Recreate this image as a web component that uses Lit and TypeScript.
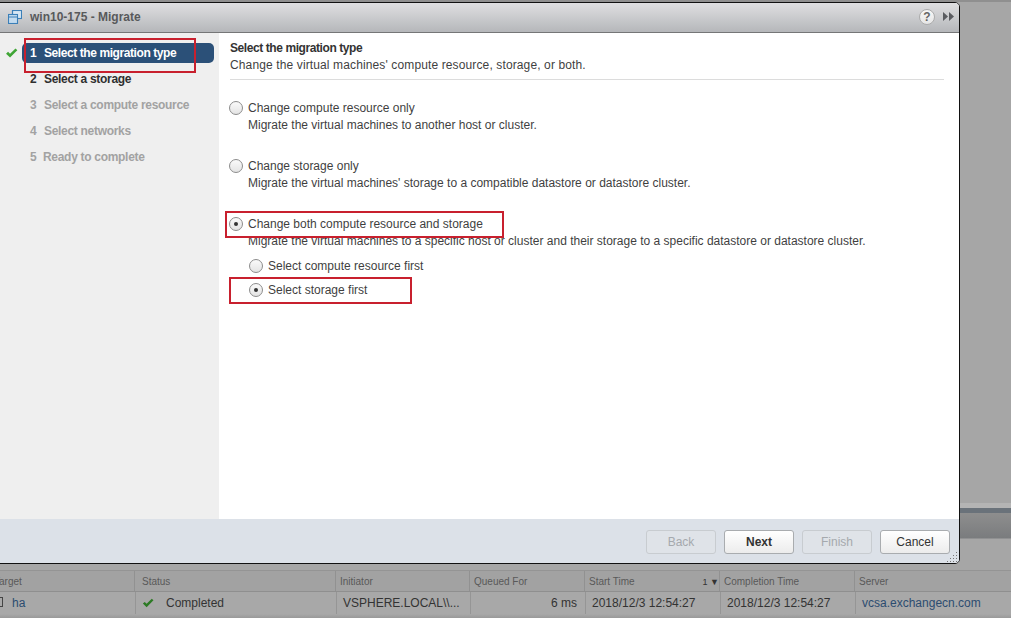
import { LitElement, html, css, svg } from "lit";
import { customElement } from "lit/decorators.js";

const check = (w: number, h: number, color: string) => html`<svg class="check" width=${w} height=${h} viewBox="0 0 14 11"><path d="M1 6.2 L3.2 4.2 L5.4 6.4 L11.4 0.6 L13.4 2.4 L5.4 10.4 Z" fill=${color}></path></svg>`;

@customElement("app-root")
export class AppRoot extends LitElement {
  static styles = css`
    :host {
      display: flex; flex-direction: column; position: relative;
      width: 1011px; height: 618px; overflow: hidden;
      font-family: "Liberation Sans", Arial, sans-serif; font-size: 12px; color: #3c3c3c;
      background: linear-gradient(180deg,
        #8f8f8f 0, #8f8f8f 2px, #a6a6a6 2px, #a6a6a6 503px, #b4b4b4 503px, #b4b4b4 508px,
        #6a727a 508px, #6a727a 513px, #8e8e8e 513px, #7a7c7e 538px, #a6a6a6 539px);
    }
    .dialog {
      box-sizing: border-box; width: 962px; height: 562px; margin: 2px 0 0 -2px; flex: none;
      display: flex; flex-direction: column; background: #fff;
      border: 1px solid #111; border-radius: 0 5px 5px 0;
    }
    .titlebar {
      box-sizing: border-box; height: 30px; flex: none; display: flex; align-items: center;
      padding: 0 5px 2px 9px; border-bottom: 1px solid #757677;
      background: linear-gradient(180deg, #dfdfe1, #b5b7ba); border-radius: 0 4px 0 0;
    }
    .title { margin-left: 8px; font-weight: bold; color: #58595b; flex: 1; }
    .help {
      box-sizing: border-box; width: 16px; height: 16px; border-radius: 50%; border: 1px solid #acacac;
      background: linear-gradient(180deg, #f7f7f7, #e6e6e6); color: #666; font-size: 12px; font-weight: bold; line-height: 14px; text-align: center;
      margin-right: 8px;
    }
    .main { flex: 1; display: flex; min-height: 0; }
    nav {
      box-sizing: border-box; width: 220px; flex: none; background: #efefef; padding: 10px 5px 0 23px;
      display: flex; flex-direction: column; gap: 6px;
    }
    .step { height: 20px; display: flex; align-items: center; color: #a2a2a2; font-weight: bold; letter-spacing: -0.3px; padding-left: 8px; }
    .step.prev { color: #2f2f2f; }
    .step.active { background: #2b5078; color: #fff; border-radius: 5px; position: relative; letter-spacing: -0.42px; }
    .step.active .check { position: absolute; left: -17px; top: 5px; }
    .num { width: 14px; flex: none; }
    .step.last .num { width: 13px; }
    .content { flex: 1; padding: 7px 15px 0 11px; min-width: 0; color: #3f3f3f; }
    .head { border-bottom: 1px solid #dcdcdc; height: 39px; line-height: 17px; margin-bottom: 19px; letter-spacing: 0.125px; }
    .head b { display: block; color: #333; letter-spacing: -0.42px; }
    .opt { height: 58px; }
    .opt.tight { height: auto; }
    .line { display: flex; align-items: center; height: 17px; }
    .radio {
      box-sizing: border-box; width: 14px; height: 14px; border-radius: 50%; border: 1px solid #8c8c8c; flex: none;
      background: linear-gradient(180deg, #fafafa, #e4e4e4); margin: 0 5px 0 -1px; position: relative;
    }
    .radio.on::after {
      content: ""; position: absolute; left: 4px; top: 4px; width: 4px; height: 4px; border-radius: 50%; background: #333;
    }
    .sub { padding-left: 18px; line-height: 17px; height: 17px; margin-top: 1px; }
    .nested { padding-left: 20px; margin-top: 7px; display: flex; flex-direction: column; gap: 7px; }
    footer {
      box-sizing: border-box; height: 44px; flex: none; background: #dce1e8; border-radius: 0 0 4px 0;
      display: flex; justify-content: flex-end; align-items: flex-start; gap: 8px; padding: 11px 9px 0 0; position: relative;
    }
    button {
      box-sizing: border-box; width: 70px; height: 24px; padding: 0 0 1px; border-radius: 3px; font: inherit;
      border: 1px solid #a9acaf; color: #333; background: linear-gradient(180deg, #fff, #ececec);
    }
    button.primary { font-weight: bold; }
    button[disabled] { border-color: #c8ccd0; color: #a5a9ad; background: #dfe3e8; }
    .grip { position: absolute; right: 1px; bottom: 1px; }
    .table { flex: none; margin: 6px 0 0 -10px; }
    .row { display: grid; }
    .row.hdr { grid-template-columns: 145px 201px 134px 115px 135px 135px 1fr; height: 22px; background: #a2a2a2; border-top: 1px solid #949494; border-bottom: 1px solid #8f8f8f; box-sizing: border-box; color: #595959; font-size: 10px; }
    .row.hdr > div { padding-left: 4px; line-height: 22px; height: 20px; border-right: 1px solid #919191; position: relative; }
    .row.hdr > .h-status { padding-left: 7px; }
    .row.body { grid-template-columns: 146px 201px 134px 115px 135px 135px 1fr; height: 26px; background: linear-gradient(180deg, #a8a8a8 0, #a8a8a8 22px, #999 26px); }
    .row.body > div { display: flex; align-items: center; height: 22px; padding-left: 6px; border-right: 1px solid #959595; color: #333; white-space: nowrap; }
    .row.body > div:last-child, .row.hdr > div:last-child { border-right: 0; }
    .link { color: #2c4c70; }
    .row.body > .c-target { padding-left: 22px; position: relative; }
    .srv { position: absolute; left: 8px; top: 5px; width: 5px; height: 10px; border: 1px solid #444; box-sizing: border-box; }
    .c-status .check { margin-right: 12px; }
    .row.body > .c-q { justify-content: flex-end; padding-right: 8px; }
    .sort { position: absolute; right: 0; top: 0; font-size: 9px; color: #333; }
    .mark { position: absolute; box-sizing: border-box; border: 2px solid #c8202e; pointer-events: none; }
    .m1 { left: 24px; top: 38px; width: 172px; height: 35px; }
    .m2 { left: 225px; top: 211px; width: 279px; height: 27px; }
    .m3 { left: 229px; top: 277px; width: 183px; height: 27px; }
  `;

  render() {
    const dots = [[9,1],[6,4],[9,4],[3,7],[6,7],[9,7],[0,10],[3,10],[6,10],[9,10]];
    return html`
      <div class="dialog">
        <div class="titlebar">
          <svg width="14" height="14" viewBox="0 0 14 14" fill="none" stroke="#3b7fb8" stroke-width="1.1">
            <rect x="4.5" y="0.5" width="9" height="8" fill="#d7e6f3"></rect>
            <rect x="0.5" y="4.5" width="9" height="9" fill="#c3dbef"></rect>
            <path d="M0.5 7h9M4.5 0.5v4"></path>
          </svg>
          <span class="title">win10-175 - Migrate</span>
          <div class="help">?</div>
          <svg width="11" height="9" viewBox="0 0 11 9"><path d="M0 0 L5 4.5 L0 9 Z M6 0 L11 4.5 L6 9 Z" fill="#5a5c60"></path></svg>
        </div>
        <div class="main">
          <nav>
            <div class="step active">${check(13, 10, "#3fa535")}<span class="num">1</span>Select the migration type</div>
            <div class="step prev"><span class="num">2</span>Select a storage</div>
            <div class="step"><span class="num">3</span>Select a compute resource</div>
            <div class="step"><span class="num">4</span>Select networks</div>
            <div class="step last"><span class="num">5</span>Ready to complete</div>
          </nav>
          <div class="content">
            <div class="head"><b>Select the migration type</b>Change the virtual machines' compute resource, storage, or both.</div>
            <div class="opt">
              <div class="line"><span class="radio"></span>Change compute resource only</div>
              <div class="sub">Migrate the virtual machines to another host or cluster.</div>
            </div>
            <div class="opt">
              <div class="line"><span class="radio"></span>Change storage only</div>
              <div class="sub">Migrate the virtual machines' storage to a compatible datastore or datastore cluster.</div>
            </div>
            <div class="opt tight">
              <div class="line"><span class="radio on"></span>Change both compute resource and storage</div>
              <div class="sub">Migrate the virtual machines to a specific host or cluster and their storage to a specific datastore or datastore cluster.</div>
              <div class="nested">
                <div class="line"><span class="radio"></span>Select compute resource first</div>
                <div class="line"><span class="radio on"></span>Select storage first</div>
              </div>
            </div>
          </div>
        </div>
        <footer>
          <button disabled>Back</button>
          <button class="primary">Next</button>
          <button disabled>Finish</button>
          <button>Cancel</button>
          <svg class="grip" width="11" height="11" viewBox="0 0 11 11">
            ${dots.map(([x, y]) => svg`<rect x=${x} y=${y} width="1" height="1" fill="#777"></rect>`)}
          </svg>
        </footer>
      </div>
      <div class="table">
        <div class="row hdr">
          <div>Target</div><div class="h-status">Status</div><div>Initiator</div><div>Queued For</div>
          <div>Start Time<span class="sort">1 ▼</span></div><div>Completion Time</div><div>Server</div>
        </div>
        <div class="row body">
          <div class="c-target"><span class="srv"></span><span class="link">ha</span></div>
          <div class="c-status">${check(12, 10, "#2c7a24")}Completed</div>
          <div>VSPHERE.LOCAL\\\\...</div>
          <div class="c-q">6 ms</div>
          <div>2018/12/3 12:54:27</div>
          <div>2018/12/3 12:54:27</div>
          <div><span class="link">vcsa.exchangecn.com</span></div>
        </div>
      </div>
      <div class="mark m1"></div>
      <div class="mark m2"></div>
      <div class="mark m3"></div>
    `;
  }
}
